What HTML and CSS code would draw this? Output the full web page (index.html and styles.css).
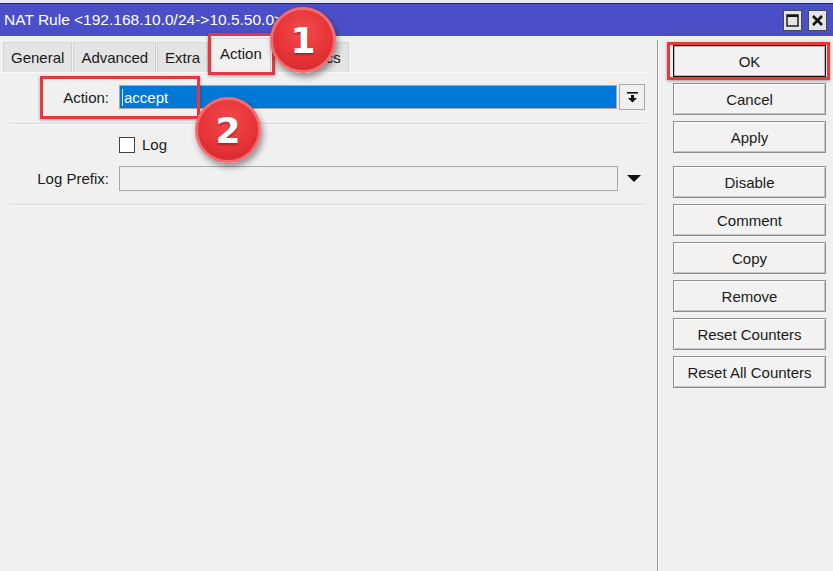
FILE: index.html
```html
<!DOCTYPE html>
<html lang="en">
<head>
    <meta charset="UTF-8">
    <title>NAT Rule</title>
    <link rel="stylesheet" href="styles.css">
</head>
<body>
    <div class="window">
        <div class="frame-top"></div>
        <div class="titlebar">
            <div class="title">NAT Rule &lt;192.168.10.0/24-&gt;10.5.50.0&gt;</div>
            <div class="tb-buttons">
                <div class="tb-btn">
                    <svg width="13" height="13" viewBox="0 0 13 13"><rect x="1" y="1" width="11" height="11" fill="none" stroke="#111" stroke-width="1.4"/><line x1="1" y1="2" x2="12" y2="2" stroke="#111" stroke-width="2"/></svg>
                </div>
                <div class="tb-btn">
                    <svg width="13" height="13" viewBox="0 0 13 13"><path d="M2 2 L11 11 M11 2 L2 11" stroke="#111" stroke-width="2.6"/></svg>
                </div>
            </div>
        </div>

        <div class="content">
            <div class="main">
                <div class="tabs">
                    <div class="tab">General</div>
                    <div class="tab">Advanced</div>
                    <div class="tab">Extra</div>
                    <div class="tab active">Action</div>
                    <div class="tab">Statistics</div>
                </div>
                <div class="panel">
                    <div class="form-row">
                        <div class="label">Action:</div>
                        <div class="input selected"><span>accept</span></div>
                        <div class="dd-btn">
                            <svg width="11" height="11" viewBox="0 0 11 11"><rect x="0" y="0" width="11" height="1.6" fill="#111"/><path d="M4 3 H7 V6 H10 L5.5 10.5 L1 6 H4 Z" fill="#111"/></svg>
                        </div>
                    </div>
                    <div class="sep"></div>
                    <div class="check-row">
                        <div class="checkbox"></div>
                        <span>Log</span>
                    </div>
                    <div class="form-row prefix-row">
                        <div class="label">Log Prefix:</div>
                        <div class="input wide"></div>
                        <div class="tri"></div>
                    </div>
                    <div class="sep"></div>
                </div>
            </div>

            <div class="divider"></div>

            <div class="side">
                <div class="btn default">OK</div>
                <div class="btn">Cancel</div>
                <div class="btn">Apply</div>
                <div class="btn group">Disable</div>
                <div class="btn">Comment</div>
                <div class="btn">Copy</div>
                <div class="btn">Remove</div>
                <div class="btn">Reset Counters</div>
                <div class="btn">Reset All Counters</div>
            </div>
        </div>
    </div>

    <!-- highlight marks -->
    <div class="mark mark-tab"></div>
    <div class="mark mark-action"></div>
    <div class="mark mark-ok"></div>
    <div class="badge badge-1">1</div>
    <div class="badge badge-2">2</div>
</body>
</html>
```

FILE: styles.css
```css
body {
    margin: 0;
    background: #f0f0f0;
    font-family: "Liberation Sans", Arial, sans-serif;
    font-size: 15px;
    color: #1a1a1a;
    position: relative;
    height: 571px;
    overflow: hidden;
}
.window {
    display: flex;
    flex-direction: column;
    height: 571px;
}
.frame-top {
    height: 3px;
    background: #e6ebf1;
    border-bottom: 1px solid #2c2c2c;
}
.titlebar {
    height: 32px;
    background: #4a4fc8;
    display: flex;
    align-items: center;
    justify-content: space-between;
    padding: 0 6px 0 4px;
    color: #fff;
}
.title {
    font-size: 15.5px;
}
.tb-buttons {
    display: flex;
    gap: 6px;
}
.tb-btn {
    width: 17px;
    height: 19px;
    background: #e4e4e4;
    border: 1px solid #4a4a4a;
    display: flex;
    align-items: center;
    justify-content: center;
}
.content {
    display: flex;
    flex: 1;
}
.main {
    width: 647px;
}
.tabs {
    display: flex;
    align-items: flex-end;
    height: 36px;
    padding-left: 3px;
}
.tab {
    height: 30px;
    line-height: 30px;
    padding: 0 7px;
    background: #e4e4e4;
    border-left: 1px solid #d0d0d0;
    border-right: 1px solid #d0d0d0;
    border-top: 1px solid #d8d8d8;
    margin-right: 1px;
    box-sizing: border-box;
}
.tab.active {
    height: 34px;
    line-height: 30px;
    background: #f0f0f0;
    padding: 0 8px;
    margin: 0 2px;
}
.panel {
    border-top: 1px solid #fafafa;
    padding-top: 11px;
}
.form-row {
    display: flex;
    align-items: center;
}
.label {
    width: 109px;
    text-align: right;
    margin-right: 10px;
}
.input {
    width: 498px;
    height: 24px;
    box-sizing: border-box;
    border: 1px solid #a8a8a8;
    background: #f0f0f0;
    display: flex;
    align-items: center;
}
.input.selected {
    background: #0078d7;
    color: #fff;
    padding-left: 2px;
}
.input.selected span {
    border-left: 1px solid #cfe3f5;
    padding-left: 1px;
}
.dd-btn {
    width: 26px;
    height: 26px;
    box-sizing: border-box;
    margin-left: 2px;
    border: 1px solid #a8a8a8;
    display: flex;
    align-items: center;
    justify-content: center;
}
.sep {
    margin: 13px 0 0 10px;
    width: 635px;
    height: 1px;
    background: #dcdcdc;
    border-bottom: 1px solid #f8f8f8;
}
.check-row {
    display: flex;
    align-items: center;
    margin: 11px 0 0 119px;
    gap: 7px;
}
.checkbox {
    width: 14px;
    height: 14px;
    background: #fff;
    border: 1px solid #444;
}
.prefix-row {
    margin-top: 13px;
}
.input.wide {
    width: 499px;
    height: 25px;
}
.tri {
    margin-left: 9px;
    width: 0;
    height: 0;
    border-left: 7px solid transparent;
    border-right: 7px solid transparent;
    border-top: 7px solid #111;
}
.divider {
    width: 1px;
    background: #9c9c9c;
    margin: 4px 0 0 10px;
    border-right: 1px solid #fafafa;
}
.side {
    display: flex;
    flex-direction: column;
    gap: 6px;
    padding: 9px 0 0 14px;
}
.btn {
    width: 153px;
    height: 32px;
    box-sizing: border-box;
    border: 1px solid #8f8f8f;
    box-shadow: inset 1px 1px #ffffff, inset -1px -1px #c4c4c4;
    background: #f2f2f2;
    display: flex;
    align-items: center;
    justify-content: center;
}
.btn.default {
    border: 1px solid #111;
    box-shadow: inset 0 0 0 1px #b8b8b8;
}
.btn.group {
    margin-top: 7px;
}
/* highlight marks over the window */
.mark {
    position: absolute;
    border: 3px solid #e8383d;
    box-shadow: 0 1px 3px rgba(0, 0, 0, 0.35);
}
.mark-tab {
    left: 208px;
    top: 33px;
    width: 61px;
    height: 36px;
}
.mark-action {
    left: 40px;
    top: 76px;
    width: 154px;
    height: 37px;
}
.mark-ok {
    left: 667px;
    top: 42px;
    width: 157px;
    height: 32px;
}
.badge {
    position: absolute;
    width: 60px;
    height: 60px;
    border-radius: 50%;
    border: 3px solid #f36b6e;
    background: radial-gradient(circle at 50% 35%, #f24a4d 0%, #e53236 60%, #c9252a 100%);
    box-shadow: 2px 4px 6px rgba(0, 0, 0, 0.4);
    color: #fff;
    font-family: "DejaVu Sans", sans-serif;
    font-weight: bold;
    font-size: 36px;
    display: flex;
    align-items: center;
    justify-content: center;
    text-shadow: 0 2px 2px rgba(0, 0, 0, 0.3);
}
.badge-1 {
    left: 270px;
    top: 7px;
}
.badge-2 {
    left: 195px;
    top: 97px;
}
```
